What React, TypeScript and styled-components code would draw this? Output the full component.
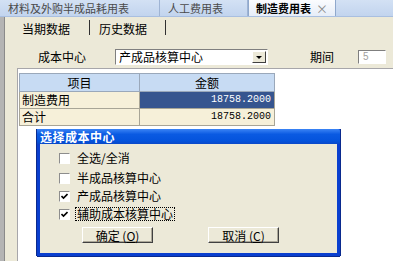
import styled, { createGlobalStyle } from "styled-components"

const GlobalStyle = createGlobalStyle`
    html, body {
        margin: 0;
        padding: 0;
    }
    body {
        width: 393px;
        height: 261px;
        overflow: hidden;
        background: #ece9d8;
        font-family: "Noto Sans CJK SC", "Liberation Sans", sans-serif;
        font-size: 12px;
        color: #000;
    }
`

const Page = styled.div`
    width: 393px;
    height: 261px;
    display: flex;
    flex-direction: column;
    overflow: hidden;
`

const TabBar = styled.div`
    height: 17px;
    flex: none;
    display: flex;
    background: linear-gradient(#d3e1f4, #c2d4ee);
    border-bottom: 1px solid #a9bfe0;
    box-sizing: border-box;
    font-size: 11px;
`

const DocTab = styled.div<{ $active?: boolean; $width: number }>`
    width: ${p => p.$width}px;
    box-sizing: border-box;
    display: flex;
    align-items: center;
    gap: 5px;
    padding-left: ${p => (p.$active ? 7 : 8)}px;
    color: ${p => (p.$active ? "#000" : "#4a4a4a")};
    font-weight: ${p => (p.$active ? 700 : 400)};
    background: ${p => (p.$active ? "linear-gradient(#fbfcfe, #e6edf8)" : "transparent")};
    border-right: 1px solid ${p => (p.$active ? "#8fa8cc" : "#9fb4d4")};
    border-left: ${p => (p.$active ? "1px solid #8fa8cc" : "none")};
    white-space: nowrap;
`

const Close = styled.span`
    color: #8a8a8a;
    font-weight: 400;
    font-size: 12px;
`

const Main = styled.div`
    flex: 1;
    display: flex;
    min-height: 0;
`

const LeftStrip = styled.div`
    width: 5px;
    flex: none;
    background: #b4b4b4;
    border-right: 1px solid #8a8a8a;
    box-sizing: border-box;
`

const Panel = styled.div`
    flex: 1;
    display: flex;
    flex-direction: column;
    min-width: 0;
`

const SubTabs = styled.div`
    height: 18px;
    flex: none;
    display: flex;
    align-items: stretch;
    padding-left: 17px;
`

const SubTab = styled.div`
    width: 68px;
    display: flex;
    align-items: center;
    padding-top: 2px;
    box-sizing: border-box;
    border-right: 1px solid #303030;
    margin-top: 3px;
    margin-right: 9px;

    &:last-child {
        width: 67px;
    }
`

const SubTabLabel = styled.span`
    letter-spacing: 0;
`

const FormRow = styled.div`
    height: 33px;
    flex: none;
    display: flex;
    align-items: flex-end;
    padding: 0 0 3px 33px;
    box-sizing: border-box;
`

const Label = styled.span<{ $width: number }>`
    width: ${p => p.$width}px;
    height: 16px;
    line-height: 16px;
`

const Combo = styled.div`
    width: 153px;
    height: 16px;
    box-sizing: border-box;
    background: #fff;
    border: 1px solid;
    border-color: #7f7f7f #fff #fff #7f7f7f;
    display: flex;
    align-items: center;
    padding-left: 3px;
    margin-right: 42px;
`

const ComboText = styled.span`
    flex: 1;
    line-height: 14px;
`

const ComboButton = styled.div`
    width: 14px;
    height: 12px;
    margin-right: 1px;
    box-sizing: border-box;
    background: #ece9d8;
    border: 1px solid;
    border-color: #fff #404040 #404040 #fff;
    display: flex;
    align-items: center;
    justify-content: center;
`

const Arrow = styled.div`
    width: 0;
    height: 0;
    border-left: 3px solid transparent;
    border-right: 3px solid transparent;
    border-top: 3px solid #000;
`

const PeriodInput = styled.div`
    width: 28px;
    height: 14px;
    box-sizing: border-box;
    background: #fff;
    border: 1px solid;
    border-color: #7f7f7f #fff #fff #7f7f7f;
    color: #a0a0a0;
    font-size: 10px;
    line-height: 12px;
    padding-left: 4px;
    margin-bottom: 1px;
    font-family: "Liberation Sans", sans-serif;
`

const Content = styled.div`
    flex: 1;
    display: flex;
    min-height: 0;
`

const GridArea = styled.div`
    flex: 1;
    margin-left: 12px;
    background: #fff;
    border-top: 1px solid #a7a6aa;
    border-left: 1px solid #a7a6aa;
    position: relative;
    padding-top: 4px;
`

const Grid = styled.table`
    border-collapse: collapse;
    margin-left: 1px;
    table-layout: fixed;
`

const Th = styled.th<{ $width: number }>`
    width: ${p => p.$width}px;
    height: 17px;
    padding: 0;
    background: #c7dbf3;
    border: 1px solid #9aa8ba;
    font-weight: 400;
    text-align: center;
    line-height: 15px;
`

const Td = styled.td<{ $num?: boolean; $selected?: boolean }>`
    height: 16px;
    padding: ${p => (p.$num ? "0 3px 0 0" : "0 0 0 2px")};
    background: ${p => (p.$selected ? "#36558f" : "#f6f0d9")};
    color: ${p => (p.$selected ? "#fff" : "#000")};
    border: 1px solid #a8a596;
    text-align: ${p => (p.$num ? "right" : "left")};
    font-family: ${p => (p.$num ? "\"Liberation Mono\", monospace" : "inherit")};
    font-size: ${p => (p.$num ? "10px" : "12px")};
    line-height: 14px;
`

const Dialog = styled.div`
    position: absolute;
    left: 19px;
    top: 60px;
    width: 303px;
    height: 127px;
    box-sizing: border-box;
    background: #ece9d8;
    border: 3px solid #0a3fcf;
    border-top: none;
    display: flex;
    flex-direction: column;
    box-shadow: -1px 0 0 #0a2a8e, 1px 0 0 #0a2a8e, 0 1px 0 #0a2a8e;
`

const TitleBar = styled.div`
    height: 15px;
    flex: none;
    margin: 0 -3px;
    padding-left: 3px;
    background: linear-gradient(#3b84f5, #0a5ae2 35%, #0453dc 80%, #0a48c8);
    color: #fff;
    font-weight: 700;
    font-size: 12px;
    line-height: 15px;
    letter-spacing: 0.5px;
    border-top-right-radius: 2px;
`

const Body = styled.div`
    flex: 1;
    display: flex;
    flex-direction: column;
    padding: 5px 0 0 19px;
`

const CheckRow = styled.div<{ $first?: boolean }>`
    height: 18px;
    display: flex;
    align-items: center;
    gap: 6px;
    margin-bottom: ${p => (p.$first ? 2 : 0)}px;
`

const Box = styled.div`
    width: 11px;
    height: 11px;
    box-sizing: border-box;
    background: #fff;
    border: 1px solid;
    border-color: #8d8d8d #fff #fff #8d8d8d;
    display: flex;
    align-items: center;
    justify-content: center;
    flex: none;
`

const CheckText = styled.span<{ $focus?: boolean }>`
    line-height: 12px;
    padding: 0 1px;
    outline: ${p => (p.$focus ? "1px dotted #000" : "none")};
    outline-offset: 0;
`

const Buttons = styled.div`
    display: flex;
    gap: 55px;
    margin-top: 4px;
    padding-left: 23px;
`

const Button = styled.div`
    width: 71px;
    height: 16px;
    box-sizing: border-box;
    border: 1px solid;
    border-color: #fff #404040 #404040 #fff;
    box-shadow: inset -1px -1px 0 #aca899;
    display: flex;
    align-items: center;
    justify-content: center;
    font-size: 12px;
`

const Key = styled.span`
    text-decoration: underline;
`

const Check = () => (
    <svg width="7" height="7" viewBox="0 0 7 7">
        <path d="M0.5 3 L2.5 5 L6.5 1" stroke="#000" strokeWidth="1.6" fill="none" />
    </svg>
)

const centers = [
    { name: "半成品核算中心", checked: false },
    { name: "产成品核算中心", checked: true },
    { name: "辅助成本核算中心", checked: true, focus: true },
]

export default function App() {
    return (
        <Page>
            <GlobalStyle />
            <TabBar>
                <DocTab $width={160}>材料及外购半成品耗用表</DocTab>
                <DocTab $width={88}>人工费用表</DocTab>
                <DocTab $width={88} $active>制造费用表<Close>×</Close></DocTab>
            </TabBar>
            <Main>
                <LeftStrip />
                <Panel>
                    <SubTabs>
                        <SubTab><SubTabLabel>当期数据</SubTabLabel></SubTab>
                        <SubTab><SubTabLabel>历史数据</SubTabLabel></SubTab>
                    </SubTabs>
                    <FormRow>
                        <Label $width={77}>成本中心</Label>
                        <Combo>
                            <ComboText>产成品核算中心</ComboText>
                            <ComboButton><Arrow /></ComboButton>
                        </Combo>
                        <Label $width={48}>期间</Label>
                        <PeriodInput>5</PeriodInput>
                    </FormRow>
                    <Content>
                        <GridArea>
                            <Grid>
                                <thead>
                                    <tr>
                                        <Th $width={119}>项目</Th>
                                        <Th $width={134}>金额</Th>
                                    </tr>
                                </thead>
                                <tbody>
                                    <tr>
                                        <Td>制造费用</Td>
                                        <Td $num $selected>18758.2000</Td>
                                    </tr>
                                    <tr>
                                        <Td>合计</Td>
                                        <Td $num>18758.2000</Td>
                                    </tr>
                                </tbody>
                            </Grid>
                            <Dialog>
                                <TitleBar>选择成本中心</TitleBar>
                                <Body>
                                    <CheckRow $first>
                                        <Box />
                                        <CheckText>全选/全消</CheckText>
                                    </CheckRow>
                                    {centers.map(c => (
                                        <CheckRow key={c.name}>
                                            <Box>{c.checked && <Check />}</Box>
                                            <CheckText $focus={c.focus}>{c.name}</CheckText>
                                        </CheckRow>
                                    ))}
                                    <Buttons>
                                        <Button>确定 (<Key>O</Key>)</Button>
                                        <Button>取消 (<Key>C</Key>)</Button>
                                    </Buttons>
                                </Body>
                            </Dialog>
                        </GridArea>
                    </Content>
                </Panel>
            </Main>
        </Page>
    )
}
